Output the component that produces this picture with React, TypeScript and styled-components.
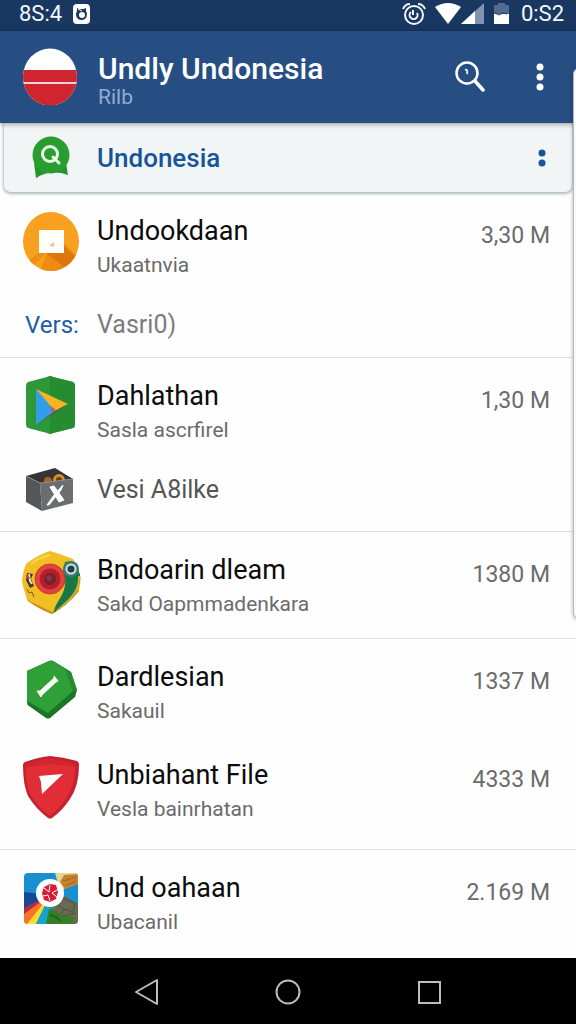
import React from "react";
import styled, { createGlobalStyle, css } from "styled-components";

const GlobalStyle = createGlobalStyle`
  *, *::before, *::after { box-sizing: border-box; }
  body {
    margin: 0;
    background: #fefefe;
    font-family: Roboto, "Liberation Sans", sans-serif;
  }
`;

const Screen = styled.div`
  position: relative;
  display: flex;
  flex-direction: column;
  min-height: 100vh;
  overflow: hidden;
`;

const StatusBar = styled.div`
  display: flex;
  align-items: center;
  justify-content: space-between;
  height: 31px;
  padding: 0 12px 4px 19px;
  background: #193761;
  color: #f4f8fc;
  font-size: 22px;
  line-height: 26px;
`;

const StatusGroup = styled.div`
  display: flex;
  align-items: center;
  gap: 11px;
`;

const AppBar = styled.header`
  position: relative;
  z-index: 1;
  display: flex;
  align-items: center;
  height: 92px;
  padding: 0 32px 0 22px;
  gap: 20px;
  background: #264e82;
  box-shadow: 0 1px 5px rgba(0, 0, 0, 0.4);
  color: #fff;
`;

const Heading = styled.div`
  flex: 1;
  min-width: 0;
  padding-top: 4px;
`;

const Title = styled.h1`
  margin: 0;
  font-size: 30px;
  font-weight: 500;
  line-height: 36px;
`;

const Subtitle = styled.p`
  margin: 0;
  color: #8facd6;
  font-size: 21px;
  line-height: 20px;
`;

const IconButton = styled.button`
  display: flex;
  align-items: center;
  justify-content: center;
  height: 44px;
  padding: 0;
  border: 0;
  background: none;
  color: inherit;
`;

const Actions = styled.div`
  display: flex;
  gap: 51px;
`;

const Picture = styled.svg`
  display: block;
  flex: none;
  width: 56px;
  height: 56px;
  overflow: visible;
`;

const Highlight = styled.div`
  display: flex;
  align-items: center;
  gap: 19px;
  height: 69px;
  margin: 0 4px 1px;
  padding: 0 26px 0 18px;
  border-radius: 0 0 7px 7px;
  background: #f2f5f6;
  box-shadow: 0 1px 3px 1px rgba(90, 125, 120, 0.5);
  color: #17559b;
`;

const HighlightLabel = styled.span`
  flex: 1;
  font-size: 26px;
  font-weight: 500;
  line-height: 36px;
`;

const Section = styled.ul<{ $gap?: number; $bottom: number; $last?: boolean }>`
  display: flex;
  flex-direction: column;
  gap: ${(p) => p.$gap ?? 0}px;
  margin: 0;
  padding: 20px 0 ${(p) => p.$bottom}px;
  list-style: none;
  ${(p) =>
    !p.$last &&
    css`
      border-bottom: 1px solid #dcdee0;
    `}
`;

const Row = styled.li<{ $single?: boolean }>`
  display: flex;
  align-items: ${(p) => (p.$single ? "center" : "flex-start")};
  gap: 19px;
  min-height: ${(p) => (p.$single ? 56 : 68)}px;
  padding: 0 26px 0 22px;
`;

const Texts = styled.div`
  flex: 1;
  min-width: 0;
`;

const Name = styled.div`
  color: #0b0b0b;
  font-size: 27px;
  line-height: 36px;
`;

const Detail = styled.div`
  color: #6b6b6b;
  font-size: 21px;
  line-height: 32px;
`;

const Size = styled.div`
  color: #6b6b6b;
  font-size: 23px;
  line-height: 46px;
`;

const Version = styled.span<{ $dark?: boolean }>`
  color: ${(p) => (p.$dark ? "#555" : "#7c7c7c")};
  font-size: 25px;
  line-height: 36px;
`;

const VersionTag = styled.span`
  flex: none;
  width: 56px;
  padding-left: 3px;
  color: #1c5ca8;
  font-size: 24px;
  line-height: 36px;
`;

const NavBar = styled.nav`
  display: flex;
  align-items: center;
  justify-content: center;
  gap: 96px;
  height: 66px;
  margin-top: auto;
  padding-top: 2px;
  background: #000;
  color: #bdbdbd;
`;

const EdgePanel = styled.div`
  position: absolute;
  z-index: 2;
  top: 68px;
  right: -9px;
  width: 12px;
  height: 551px;
  border: 1px solid #b4b8bc;
  border-radius: 8px;
  background: #f8f9fa;
  box-shadow: 0 1px 4px rgba(0, 0, 0, 0.3);
`;

const FlagIcon = () => (
  <Picture viewBox="0 0 56 56" aria-hidden="true">
    <clipPath id="flag"><ellipse cx="28" cy="28" rx="27" ry="28.5" /></clipPath>
    <g clipPath="url(#flag)">
      <rect width="56" height="57" y="-1" fill="#fff" />
      <rect y="21" width="56" height="36" fill="#d0242f" />
      <rect y="33" width="56" height="2" fill="#f6d5d8" />
    </g>
  </Picture>
);

const BadgeIcon = () => (
  <Picture viewBox="0 0 56 56" aria-hidden="true">
    <path d="M12 33 14 48Q29 39 46 45L44 33Z" fill="#24962c" />
    <circle cx="29" cy="25" r="18.5" fill="#2a9d30" />
    <circle cx="28" cy="24" r="7.5" fill="none" stroke="#effbe9" strokeWidth="3" />
    <path d="M31 27 37 33" stroke="#effbe9" strokeWidth="3" strokeLinecap="round" />
  </Picture>
);

const OrangeIcon = () => (
  <Picture viewBox="0 0 56 56" aria-hidden="true">
    <clipPath id="disc"><ellipse cx="29" cy="28.5" rx="28" ry="29.5" /></clipPath>
    <g clipPath="url(#disc)">
      <rect x="0" y="-2" width="58" height="61" fill="#f8a020" />
      <path d="M42 30 58 46 45 60H17L25 40Z" fill="#ee8c12" />
      <path d="M42 33 58 48 42 54 24 40Z" fill="#dd760c" />
      <path d="M17 40H25L11 53 7 47Z" fill="#ef9016" />
    </g>
    <rect x="17" y="17" width="25" height="23" fill="#fffefa" />
    <path d="M28.5 32.5 31.5 30 31 33Z" fill="none" stroke="#efa95b" />
  </Picture>
);

const PlayIcon = () => (
  <Picture viewBox="0 0 56 56" aria-hidden="true">
    <path d="M25-1Q28-3 31-1L51 4Q53 5 53 8V46Q53 49 51 50L31 55Q28 57 25 55L6 50Q4 49 4 46V8Q4 5 6 4Z" fill="#2e9838" />
    <path d="M28-2 31-1 51 4Q53 5 53 8V46Q53 49 51 50L31 55 28 56Z" fill="#258c30" />
    <path d="M14 11 34 32 14 47Z" fill="#309fe8" />
    <path d="M14 11 46 26 33 33Z" fill="#f8b51e" />
    <path d="M33 33 46 26 14 47Z" fill="#4c545c" />
    <path d="M29 28 34 32 29 36Z" fill="#b9606c" />
  </Picture>
);

const BoxIcon = () => (
  <Picture viewBox="0 0 56 56" aria-hidden="true">
    <path d="M4 14 33 6 51 17 18 21Z" fill="#343434" />
    <clipPath id="opening"><path d="M4 14 33 6 51 17 18 21Z" /></clipPath>
    <g clipPath="url(#opening)">
      <circle cx="26" cy="19" r="4" fill="#a06b20" />
      <circle cx="37" cy="18" r="6" fill="#d5902c" />
      <circle cx="37" cy="18" r="3" fill="#654319" />
    </g>
    <path d="M4 14 18 21 20 49 4 40Z" fill="#555657" />
    <path d="M18 21 51 17V41L20 49Z" fill="#6c6d6e" />
    <path d="M18 21 51 17M4 14 18 21" stroke="#8c8c8c" />
    <path d="M28 25 32 24 42 38 37 40ZM41 23 39 28 27 43 25 43 32 33Z" fill="#fff" stroke="#fff" strokeLinejoin="round" />
  </Picture>
);

const LensIcon = () => (
  <Picture viewBox="0 0 56 56" aria-hidden="true">
    <clipPath id="lens"><path d="M28-1Q32 0 51 7 56 16 58 23 59 30 57 39 46 53 30 62 17 57 6 49 1 37 0 29 1 19 4 12 15 3 28-1Z" /></clipPath>
    <g clipPath="url(#lens)">
      <rect x="-1" y="-2" width="62" height="66" fill="#f1bf22" />
      <path d="M0 38 7 49 30 60 57 38V44L30 63 0 52Z" fill="#ca8a18" />
      <path d="M43 10Q54 7 60 22L55 39Q46 53 32 61 32 55 37 48 47 33 41 19Z" fill="#177746" />
      <path d="M57 24Q58 37 47 48L34 60" fill="none" stroke="#d2b12e" strokeWidth="2" />
    </g>
    <path d="M9 12 16 7 28 3" fill="none" stroke="#f9d457" strokeWidth="2" />
    <circle cx="28" cy="27" r="15" fill="#e2433c" stroke="#c3392e" />
    <circle cx="28" cy="27" r="10.5" fill="#b31f2c" />
    <circle cx="28" cy="27" r="6" fill="#74212b" />
    <circle cx="27" cy="26" r="3" fill="#8a3440" />
    <circle cx="49" cy="17" r="8" fill="#397f75" />
    <circle cx="49" cy="17" r="4.5" fill="#213e49" stroke="#d6e2df" strokeWidth="2" />
    <path d="M5 21 11 22 9 27 12 34 8 36 4 28Z" fill="#403631" />
    <path d="M7 22 8 29 10 32" fill="none" stroke="#f0dfb8" strokeWidth="2" />
    <path d="M5 23 7 27" stroke="#d34231" strokeWidth="2" />
    <path d="M5 37 7 41 10 40 12 45" fill="none" stroke="#75612a" />
  </Picture>
);

const GemIcon = () => (
  <Picture viewBox="0 0 56 56" aria-hidden="true">
    <path d="M5 12 27 2Q29 1 31 2L49 13 55 31 53 38 28 59Q26 60 24 59L7 47Q5 46 5 43Z" fill="#197628" />
    <path d="M5 12 27 2Q29 1 31 2L44 10 51 32 26 54 5 42Z" fill="#2f9f38" />
    <path d="M31 2 49 13 55 31 51 33 43 10Z" fill="#258a30" />
    <path d="M15 32 18 32 32 19 32 17 36 22 34 23 20 36 19 38Z" fill="#f5fff3" stroke="#f5fff3" strokeLinejoin="round" />
  </Picture>
);

const ShieldIcon = () => (
  <Picture viewBox="0 0 56 56" aria-hidden="true">
    <path d="M3 5Q17 0 28-1 41 0 55 4 57 5 57 8 57 29 48 42 40 54 30 61 28 62 26 61 14 52 6 39 1 28 1 8 1 6 3 5Z" fill="#c4222d" />
    <path d="M4 7Q17 3 28 2 40 3 53 7 54 27 45 40 37 52 28 59 15 49 8 37 3 26 4 7Z" fill="#e12d36" />
    <path d="M4 7Q17 3 28 2 40 3 53 7V10Q28 4 4 11Z" fill="#d12630" />
    <path d="M17 19 41 17 20 37 19 25Z" fill="#fff" />
  </Picture>
);

const CollageIcon = () => (
  <Picture viewBox="0 0 56 56" aria-hidden="true">
    <clipPath id="collage"><rect x="2" y="3" width="54" height="51" rx="4" /></clipPath>
    <g clipPath="url(#collage)">
      <rect x="2" y="3" width="54" height="51" fill="#1790d2" />
      <path d="M2 22 28 25 2 46Z" fill="#174992" />
      <path d="M28 25 2 38V48Z" fill="#ba2846" />
      <path d="M28 25 2 44V54H10Z" fill="#f27628" />
      <path d="M28 25 5 54H14Z" fill="#ffdc2d" />
      <path d="M28 25 14 54H27Z" fill="#17a4ca" />
      <path d="M33 3H56V14L38 20Z" fill="#e6d78c" />
      <path d="M42 5 56 4V14L43 19 38 12Z" fill="#c78030" />
      <path d="M41 11 54 7M43 16 54 11" stroke="#a0642a" />
      <path d="M31 33 43 26 56 34V54H27Z" fill="#686a51" />
      <path d="M40 28 53 33 51 42 42 39 34 34ZM42 39 37 47 54 43" fill="none" stroke="#4c543f" />
      <path d="M27 39 34 41 40 46 52 47 50 54H24Z" fill="#347f25" />
      <path d="M28 45 34 47 38 51" fill="none" stroke="#23611f" strokeWidth="2" />
    </g>
    <circle cx="28" cy="23" r="14" fill="#fff" />
    <path d="M22 17 28 14 34 15 36 22 34 29 28 32 22 30 20 23Z" fill="#d91d38" />
    <path d="M22 18 27 22 28 15M35 20 30 23 35 27M21 26 26 25 28 31" fill="none" stroke="#fff" />
  </Picture>
);

const NoticeIcon = () => (
  <svg width="17" height="20" viewBox="0 0 17 20" aria-hidden="true">
    <rect width="17" height="20" rx="4" fill="#fff" />
    <circle cx="8.5" cy="10.5" r="5.5" fill="#193761" />
    <path d="M4 4 8 6 13 4V9H4Z" fill="#193761" />
    <circle cx="9" cy="11" r="3" fill="#fff" />
    <path d="M5 5 9 7" stroke="#fff" />
  </svg>
);

const StatusIcons = () => (
  <svg width="108" height="24" viewBox="0 0 108 24" aria-hidden="true">
    <g fill="none" stroke="#f2f6fa" strokeWidth="2">
      <circle cx="12" cy="13" r="9" />
      <path d="M1 7Q3 2 8 2M23 7Q21 2 16 2" />
      <path d="M9 10A4 4 0 1 0 15 11M11 8V13" />
    </g>
    <path d="M33 5Q46-3 59 5L46 22Z" fill="#fff" />
    <path d="M59 22 82 1V22Z" fill="#8094b2" />
    <path d="M59 22 73 9V22Z" fill="#fff" />
    <path d="M92 3H96V1H103V3H107V22H92Z" fill="#526a8f" />
    <path d="M92 12H107V22H92Z" fill="#fff" />
    <path d="M93 11 97 13 101 11 105 12" fill="none" stroke="#203655" />
  </svg>
);

const SearchIcon = () => (
  <svg width="30" height="32" viewBox="0 0 30 32" aria-hidden="true">
    <circle cx="12" cy="12" r="10.5" fill="none" stroke="#fff" strokeWidth="2.5" />
    <path d="M20 20 28 29" stroke="#fff" strokeWidth="3.5" strokeLinecap="round" />
    <path d="M10 9Q13 8 12 13" fill="none" stroke="#dce8f5" strokeWidth="2" />
  </svg>
);

const Dots = ({ count }: { count: number }) => (
  <svg width="8" height={count * 10} viewBox={`0 0 8 ${count * 10}`} aria-hidden="true">
    {Array.from({ length: count }, (_, i) => (
      <circle key={i} cx="4" cy={5 + i * 10} r="3.5" fill="currentColor" />
    ))}
  </svg>
);

type Item = {
  icon: React.ReactNode;
  name: string;
  detail: string;
  size: string;
};

const AppRow = ({ icon, name, detail, size }: Item) => (
  <Row>
    {icon}
    <Texts>
      <Name>{name}</Name>
      <Detail>{detail}</Detail>
    </Texts>
    <Size>{size}</Size>
  </Row>
);

export default function App() {
  return (
    <Screen>
      <GlobalStyle />
      <StatusBar>
        <StatusGroup>
          <span>8S:4</span>
          <NoticeIcon />
        </StatusGroup>
        <StatusGroup>
          <StatusIcons />
          <span>0:S2</span>
        </StatusGroup>
      </StatusBar>
      <AppBar>
        <FlagIcon />
        <Heading>
          <Title>Undly Undonesia</Title>
          <Subtitle>Rilb</Subtitle>
        </Heading>
        <Actions>
          <IconButton aria-label="Search"><SearchIcon /></IconButton>
          <IconButton aria-label="More options"><Dots count={3} /></IconButton>
        </Actions>
      </AppBar>
      <main>
        <Highlight>
          <BadgeIcon />
          <HighlightLabel>Undonesia</HighlightLabel>
          <IconButton aria-label="Item options"><Dots count={2} /></IconButton>
        </Highlight>
        <Section $gap={16} $bottom={4}>
          <AppRow icon={<OrangeIcon />} name="Undookdaan" detail="Ukaatnvia" size="3,30 M" />
          <Row $single>
            <VersionTag>Vers:</VersionTag>
            <Version>Vasri0)</Version>
          </Row>
        </Section>
        <Section $gap={16} $bottom={13}>
          <AppRow icon={<PlayIcon />} name="Dahlathan" detail="Sasla ascrfirel" size="1,30 M" />
          <Row $single>
            <BoxIcon />
            <Version $dark>Vesi A8ilke</Version>
          </Row>
        </Section>
        <Section $bottom={18}>
          <AppRow icon={<LensIcon />} name="Bndoarin dleam" detail="Sakd Oapmmadenkara" size="1380 M" />
        </Section>
        <Section $gap={30} $bottom={24}>
          <AppRow icon={<GemIcon />} name="Dardlesian" detail="Sakauil" size="1337 M" />
          <AppRow icon={<ShieldIcon />} name="Unbiahant File" detail="Vesla bainrhatan" size="4333 M" />
        </Section>
        <Section $bottom={20} $last>
          <AppRow icon={<CollageIcon />} name="Und oahaan" detail="Ubacanil" size="2.169 M" />
        </Section>
      </main>
      <NavBar>
        <IconButton aria-label="Back">
          <svg width="46" height="28" viewBox="0 0 46 28" aria-hidden="true">
            <path d="M34 2V26L13 14Z" fill="none" stroke="currentColor" strokeWidth="2" strokeLinejoin="round" />
          </svg>
        </IconButton>
        <IconButton aria-label="Home">
          <svg width="46" height="28" viewBox="0 0 46 28" aria-hidden="true">
            <circle cx="23" cy="14" r="11.5" fill="none" stroke="currentColor" strokeWidth="2" />
          </svg>
        </IconButton>
        <IconButton aria-label="Recent apps">
          <svg width="46" height="28" viewBox="0 0 46 28" aria-hidden="true">
            <rect x="12" y="4" width="21" height="21" fill="none" stroke="currentColor" strokeWidth="2" />
          </svg>
        </IconButton>
      </NavBar>
      <EdgePanel />
    </Screen>
  );
}
